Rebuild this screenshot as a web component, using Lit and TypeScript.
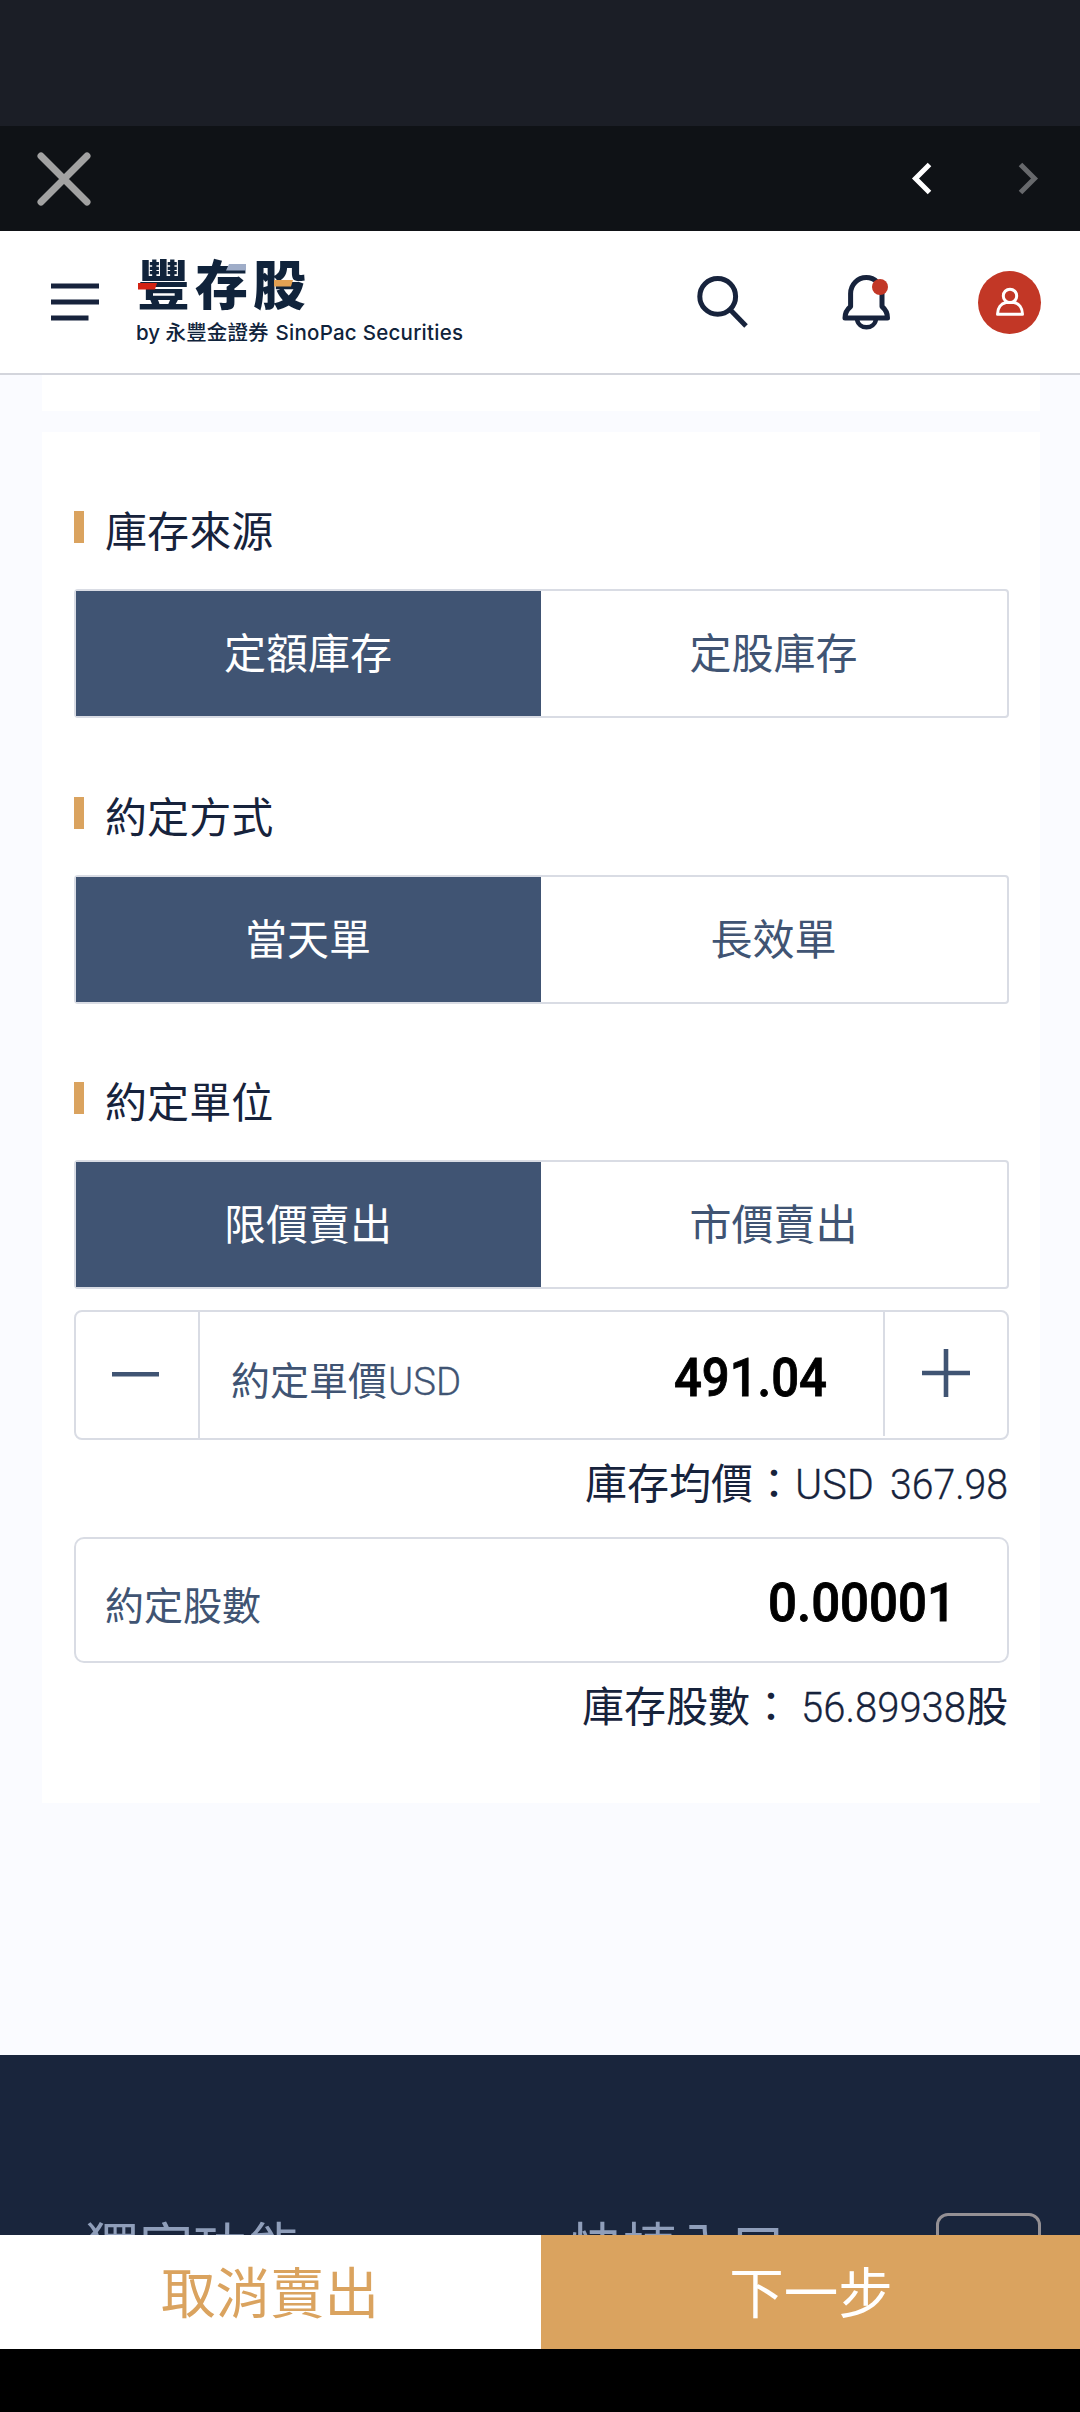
import { LitElement, html, css } from "lit";
import { customElement, property } from "lit/decorators.js";

const shared = css`
  * {
    box-sizing: border-box;
  }
  :host {
    font-family: Roboto, "Noto Sans CJK TC", sans-serif;
  }
`;

/* Latin run set to a fixed advance width, sitting on the surrounding baseline. */
const fitted = (text: string, width: number, cls = "") => html`
  <svg class="fit ${cls}" width=${width} height="1" viewBox="0 0 ${width} 1">
    <text x="0" y="1" textLength=${width} lengthAdjust="spacingAndGlyphs">${text}</text>
  </svg>
`;

@customElement("app-top-bars")
class TopBars extends LitElement {
  static styles = [
    shared,
    css`
      :host {
        display: block;
      }
      .status {
        height: 126px;
        background: #1b1e26;
      }
      .nav {
        height: 105px;
        background: #0f1216;
        display: flex;
        align-items: center;
        padding: 0 41px 0 36px;
      }
      .nav svg {
        display: block;
      }
      .back {
        margin-left: auto;
        margin-right: 84px;
      }
      .header {
        height: 144px;
        background: #fff;
        border-bottom: 2px solid #d3d5dc;
        display: flex;
        align-items: center;
        padding: 0 38px 0 51px;
      }
      .header svg {
        display: block;
        flex: none;
      }
      .logo {
        margin-left: 37px;
      }
      .actions {
        margin-left: auto;
        display: flex;
        align-items: center;
      }
      .bell {
        margin: 0 84px 0 89px;
      }
      .brand {
        font-family: "Noto Sans CJK TC", sans-serif;
        font-weight: 900;
        font-size: 53px;
      }
      .sub {
        font-family: Inter, "Noto Sans CJK TC", sans-serif;
        font-weight: 500;
        font-size: 20.500px;
      }
    `,
  ];

  render() {
    return html`
      <div class="status"></div>
      <div class="nav">
        <svg width="56" height="56" viewBox="0 0 56 56" stroke="#a2a2a2" stroke-width="7" stroke-linecap="round">
          <path d="M5 5 51 51M51 5 5 51" />
        </svg>
        <svg class="back" width="22" height="34" viewBox="0 0 22 34" fill="none" stroke="#fff" stroke-width="5">
          <path d="M18.500 2.500 4.500 16.500 18.500 30.500" />
        </svg>
        <svg width="22" height="34" viewBox="0 0 22 34" fill="none" stroke="#67696c" stroke-width="5">
          <path d="M3.500 2.500 17.500 16.500 3.500 30.500" />
        </svg>
      </div>
      <div class="header">
        <svg width="49" height="38" viewBox="0 0 49 38" fill="#17233c">
          <path d="M0 0.500h48v5H0zM0 16.500h48v5H0zM0 32.500h37.500v5H0z" />
        </svg>
        <svg class="logo" width="330" height="96" viewBox="0 0 330 96" fill="#10233b">
          <text class="brand" x="0" y="51" textLength="169" lengthAdjust="spacing">豐存股</text>
          <path d="M1 29h19l-2 6.500H1z" fill="#d22314" />
          <path d="M92 10h17v6.500H89z" fill="#9fadc8" />
          <path d="M137 26h19l-2 6.500h-17z" fill="#e2a052" />
          <text class="sub" x="-1" y="86" textLength="24" lengthAdjust="spacing">by</text>
          <text class="sub" x="28.500" y="86" textLength="103" lengthAdjust="spacing">永豐金證券</text>
          <text class="sub" x="138.500" y="86" textLength="187.500" lengthAdjust="spacing">SinoPac Securities</text>
        </svg>
        <div class="actions">
          <svg width="54" height="56" viewBox="0 0 54 56" fill="none" stroke="#17233c" stroke-width="5">
            <circle cx="22.700" cy="22.400" r="17.900" />
            <path d="M35 35.500 51 52" />
          </svg>
          <svg class="bell" width="56" height="58" viewBox="0 0 56 58" fill="none" stroke="#17233c" stroke-width="5">
            <path
              d="M12.600 33.500V20.500A15.700 16 0 0 1 44 20.500V33.500C47.500 36.500 49.500 40 49.500 45H7C7 40 9 36.500 12.600 33.500Z"
              stroke-linejoin="round"
            />
            <path d="M19 46C20.500 57 36.500 57 38 46" stroke-width="4.500" />
            <circle cx="42" cy="14" r="8" fill="#c23726" stroke="none" />
          </svg>
          <svg width="64" height="64" viewBox="0 0 64 64" fill="none" stroke="#fff" stroke-width="3">
            <circle cx="31.500" cy="32.500" r="31.500" fill="#c23726" stroke="none" />
            <circle cx="32" cy="25.900" r="6.700" />
            <path d="M28 32.500C23 33.500 19.500 38 19.500 44.200H44.500C44.500 38 41 33.500 36 32.500Z" stroke-linejoin="round" />
          </svg>
        </div>
      </div>
    `;
  }
}

@customElement("app-choice")
class Choice extends LitElement {
  @property() heading = "";
  @property({ type: Array }) options: string[] = [];

  static styles = [
    shared,
    css`
      :host {
        display: block;
      }
      .title {
        display: flex;
        align-items: flex-start;
        gap: 21px;
        height: 78px;
        color: #17233c;
        font-size: 42px;
        line-height: 43px;
        letter-spacing: 0.100px;
      }
      .mark {
        width: 10px;
        height: 32px;
        background: #daa35f;
      }
      .row {
        height: 129px;
        border: 2px solid #d9dce4;
        border-radius: 4px;
        display: grid;
        grid-template-columns: 465px 1fr;
        font-size: 42px;
      }
      .opt {
        display: flex;
        align-items: center;
        justify-content: center;
        padding: 0 1px 6px 0;
        color: #405473;
      }
      .opt.on {
        background: #405473;
        color: #fff;
      }
    `,
  ];

  render() {
    return html`
      <div class="title"><span class="mark"></span><span>${this.heading}</span></div>
      <div class="row">
        ${this.options.map((o, i) => html`<div class="opt ${i === 0 ? "on" : ""}">${o}</div>`)}
      </div>
    `;
  }
}

@customElement("app-root")
class AppRoot extends LitElement {
  static styles = [
    shared,
    css`
      :host {
        display: block;
      }
      .page {
        width: 1080px;
        height: 2412px;
        display: flex;
        flex-direction: column;
        overflow: hidden;
        background: #fafbff;
      }
      .prev {
        height: 36px;
        margin: 0 40px 0 42px;
        background: #fff;
        flex: none;
      }
      .card {
        margin: 21px 40px 0 42px;
        height: 1371px;
        padding: 79px 31px 0 32px;
        background: #fff;
        flex: none;
      }
      .fit {
        overflow: visible;
        fill: currentColor;
        stroke: currentColor;
        stroke-width: 0.300px;
        flex: none;
      }
      .gap {
        height: 78.500px;
      }
      .price {
        margin-top: 21px;
        height: 130px;
        border: 2px solid #d9dce4;
        border-radius: 8px;
        display: flex;
      }
      .step {
        display: flex;
        align-items: center;
        justify-content: center;
        flex: none;
      }
      .minus {
        width: 124px;
        border-right: 2px solid #d9dce4;
      }
      .minus svg {
        margin: 0 2px 1px 0;
      }
      .plus {
        width: 124px;
        height: 124px;
        padding-bottom: 3px;
        border-left: 2px solid #d9dce4;
      }
      .field {
        flex: 1;
        display: flex;
        justify-content: space-between;
        align-items: center;
      }
      .price .field {
        padding: 0 56px 0 31px;
      }
      .label {
        color: #405473;
        font-size: 39px;
        line-height: 50px;
        padding-top: 14px;
        display: flex;
        align-items: baseline;
      }
      .label .lat {
        font-size: 38px;
        font-weight: 300;
        margin-left: 1px;
      }
      .value {
        color: #000;
        font-size: 54px;
        font-weight: 500;
        line-height: 60px;
        padding-top: 5px;
      }
      .value .fit {
        stroke-width: 0.900px;
      }
      .info {
        display: flex;
        justify-content: flex-end;
        align-items: baseline;
        padding-right: 1px;
        color: #17233c;
        font-size: 42px;
        line-height: 50px;
      }
      .info .lat {
        font-weight: 300;
      }
      .avg {
        margin-top: 20px;
        height: 77px;
      }
      .shares {
        height: 126px;
        border: 2px solid #d9dce4;
        border-radius: 10px;
        display: flex;
        padding: 0 51px 0 29px;
      }
      .hold {
        margin-top: 20px;
      }
      .sp1 {
        margin-right: 16px;
      }
      .sp2 {
        margin-left: 9px;
      }
      .footer {
        margin-top: 252px;
        height: 180px;
        flex: none;
        overflow: hidden;
        background: #19253c;
        color: #8f9eba;
        display: grid;
        grid-template-columns: 484px 1fr 105px;
        padding: 158px 39px 0 85px;
        font-size: 54px;
        line-height: 66px;
      }
      .totop {
        height: 100px;
        border: 3px solid #949094;
        border-radius: 12px;
      }
      .cell {
        padding-top: 4px;
      }
      .buttons {
        display: grid;
        grid-template-columns: 541px 1fr;
        height: 114px;
        flex: none;
        font-size: 54.500px;
      }
      .btn {
        display: flex;
        align-items: center;
        justify-content: center;
        padding: 0 1px 6px 0;
        background: #fff;
        color: #daa35f;
      }
      .btn.next {
        padding-right: 0;
        padding-left: 1px;
        background: #daa35f;
        color: #fff;
      }
      .system {
        flex: 1;
        background: #000;
      }
    `,
  ];

  render() {
    return html`
      <div class="page">
        <app-top-bars></app-top-bars>
        <div class="prev"></div>
        <div class="card">
          <app-choice heading="庫存來源" .options=${["定額庫存", "定股庫存"]}></app-choice>
          <div class="gap"></div>
          <app-choice heading="約定方式" .options=${["當天單", "長效單"]}></app-choice>
          <div class="gap"></div>
          <app-choice heading="約定單位" .options=${["限價賣出", "市價賣出"]}></app-choice>
          <div class="price">
            <div class="step minus">
              <svg width="48" height="5" viewBox="0 0 48 5"><path d="M0 0h47v4.500H0z" fill="#405473" /></svg>
            </div>
            <div class="field">
              <span class="label"><span>約定單價</span>${fitted("USD", 73, "lat")}</span>
              <span class="value">${fitted("491.04", 153)}</span>
            </div>
            <div class="step plus">
              <svg width="48" height="48" viewBox="0 0 48 48">
                <path d="M0 21.700h48v4.600H0zM21.700 0h4.600v48h-4.600z" fill="#405473" />
              </svg>
            </div>
          </div>
          <div class="info avg">
            <span>庫存均價：</span>${fitted("USD", 79, "lat sp1")}${fitted("367.98", 118, "lat")}
          </div>
          <div class="shares">
            <div class="field">
              <span class="label">約定股數</span>
              <span class="value">${fitted("0.00001", 188)}</span>
            </div>
          </div>
          <div class="info hold">
            <span>庫存股數：</span>${fitted("56.89938", 165, "lat sp2")}<span>股</span>
          </div>
        </div>
        <div class="footer">
          <span class="cell">獨家功能</span>
          <span class="cell">快捷入口</span>
          <span class="totop"></span>
        </div>
        <div class="buttons">
          <div class="btn">取消賣出</div>
          <div class="btn next">下一步</div>
        </div>
        <div class="system"></div>
      </div>
    `;
  }
}
